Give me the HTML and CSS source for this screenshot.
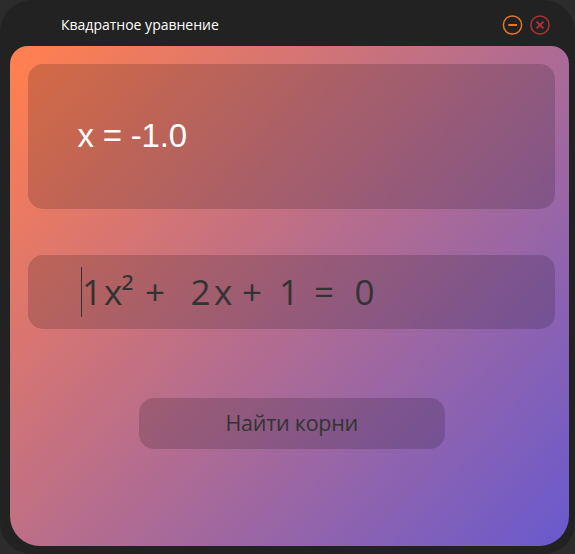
FILE: index.html
```
<!DOCTYPE html>
<html lang="ru">
<head>
<meta charset="utf-8">
<title>Квадратное уравнение</title>
<link rel="stylesheet" href="styles.css">
</head>
<body>
<div class="window">
  <header class="titlebar">
    <span class="title">Квадратное уравнение</span>
    <div class="controls">
      <svg class="control minimize" viewBox="0 0 20 20"><circle cx="9.5" cy="10" r="9.1"/><path class="mark" d="M5.3 10H14.1"/></svg>
      <svg class="control close" viewBox="0 0 20 20"><circle cx="10" cy="10" r="9.1"/><path class="mark" d="M6.6 6.6L13.4 13.4M13.4 6.6L6.6 13.4"/></svg>
    </div>
  </header>
  <main class="content">
    <section class="card result"><span class="answer">x = -1.0</span></section>
    <section class="card equation">
      <span class="caret"></span>
      <span class="term coef-a">1</span>
      <span class="term var-a">x²</span>
      <span class="term plus-a">+</span>
      <span class="term coef-b">2</span>
      <span class="term var-b">x</span>
      <span class="term plus-b">+</span>
      <span class="term coef-c">1</span>
      <span class="term equals">=</span>
      <span class="term zero">0</span>
    </section>
    <button class="card solve"><span class="solve-label">Найти корни</span></button>
  </main>
</div>
</body>
</html>
```

FILE: styles.css
```
* { box-sizing: border-box; }
body {
  margin: 0;
  background: #2c2c2c;
  font-family: "Open Sans", "Noto Sans", sans-serif;
}
.window {
  height: 554px;
  padding: 0 6px 8px 10px;
  border-radius: 32px;
  background: #222;
}
.titlebar {
  display: flex;
  justify-content: space-between;
  align-items: center;
  height: 46px;
  padding: 4px 19px 0 51px;
}
.title { padding-bottom: 2px; color: #fff; font-size: 14px; }
.controls { display: flex; gap: 7px; }
.control { display: block; width: 20px; height: 20px; overflow: visible; fill: none; stroke-width: 1.5; }
.mark { stroke-width: 2; }
.minimize { stroke: #e67626; }
.close { stroke: #b03234; }
.content {
  display: flex;
  flex-direction: column;
  height: 500px;
  padding: 18px 14px 0 17.5px;
  border-radius: 18px 18px 30px 30px;
  background: linear-gradient(131.5deg, #ff7f50 2%, #6a5acd 99%);
}
.card { border-radius: 15px; background: rgba(0, 0, 0, 0.16); }
.result {
  display: flex;
  align-items: center;
  height: 145px;
  padding: 0 0 2px 50px;
}
.answer { color: #fff; font: 33px "Liberation Sans", sans-serif; letter-spacing: -0.2px; }
.equation {
  display: flex;
  align-items: center;
  height: 74px;
  margin-top: 46px;
  padding-left: 53.5px;
  color: #333;
  font-size: 35px;
  line-height: 50px;
}
.caret { width: 1px; height: 50px; background: #333; }
.term { flex: none; white-space: nowrap; }
.coef-a { width: 22px; }
.var-a { width: 41px; letter-spacing: -0.8px; }
.plus-a { width: 45.5px; }
.coef-b { width: 23.5px; }
.var-b { width: 28px; }
.plus-b { width: 37px; }
.coef-c { width: 35px; }
.equals { width: 40.5px; }
.solve {
  align-self: center;
  width: 306px;
  height: 51px;
  margin-top: 69px;
  margin-left: 1px;
  padding: 0 0 2px;
  border: 0;
  color: #333;
  font: 21.5px "Open Sans", "Noto Sans", sans-serif;
  letter-spacing: -0.25px;
}
```
